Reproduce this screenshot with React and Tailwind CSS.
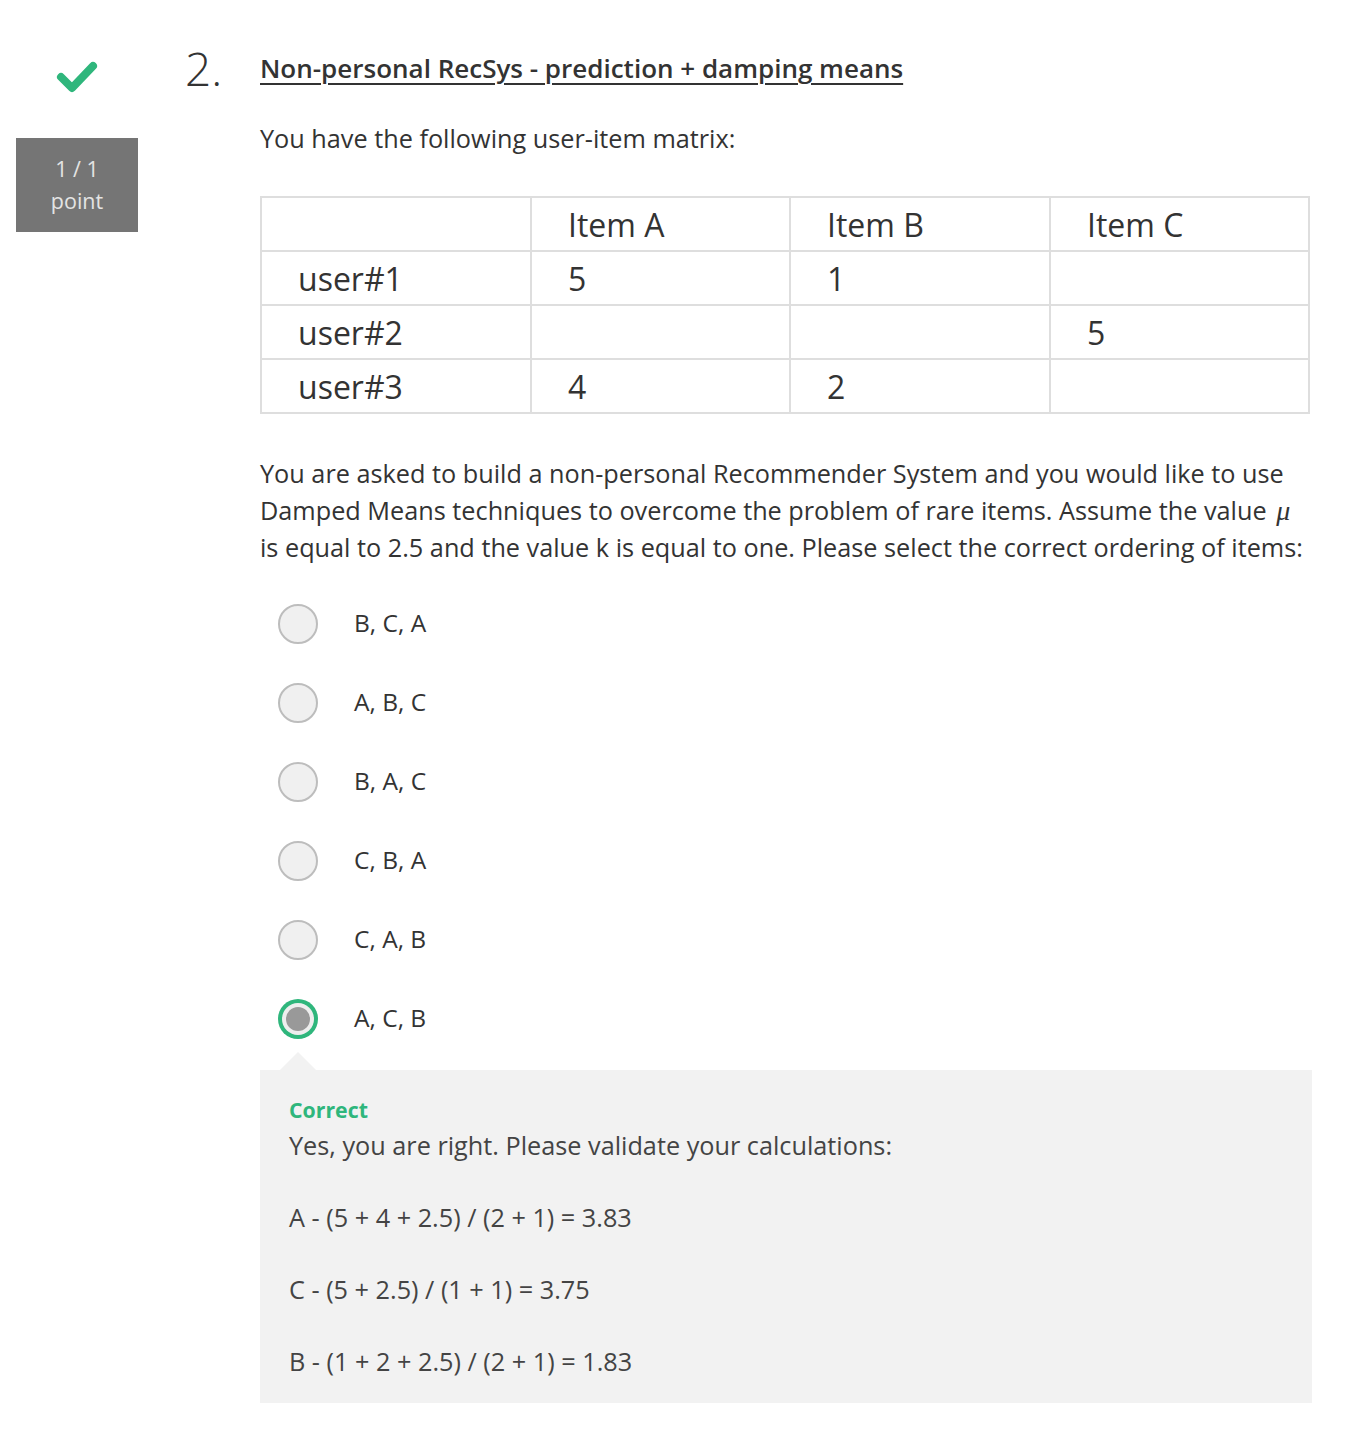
import React from 'react';

const options = ['B, C, A', 'A, B, C', 'B, A, C', 'C, B, A', 'C, A, B', 'A, C, B'];
const selected = 5;

const rows = [
  ['user#1', '5', '1', ''],
  ['user#2', '', '', '5'],
  ['user#3', '4', '2', ''],
];

function Radio({ checked }) {
  if (checked) {
    return (
      <span className="flex h-10 w-10 items-center justify-center rounded-full bg-[#2fb67c]">
        <span className="flex h-8 w-8 items-center justify-center rounded-full bg-[#eeeeee]">
          <span className="h-6 w-6 rounded-full bg-[#999999]" />
        </span>
      </span>
    );
  }
  return <span className="h-10 w-10 rounded-full border-2 border-[#bdbdbd] bg-[#f0f0f0]" />;
}

export default function App() {
  const font = { fontFamily: '"Open Sans", "Liberation Sans", sans-serif' };
  return (
    <div style={font} className="flex min-h-[1454px] w-[1364px] bg-white text-[#333333]">
      {/* score column */}
      <div className="flex w-[185px] flex-col pl-4 pt-[60px]">
        <div className="flex w-[122px] justify-center">
          <svg width="42" height="34" viewBox="0 0 42 34">
            <path d="M5 17 L16 28 L37 6" fill="none" stroke="#2fb67c" strokeWidth="8" strokeLinecap="round" strokeLinejoin="round" />
          </svg>
        </div>
        <div className="mt-[44px] flex h-[94px] w-[122px] flex-col items-center justify-center bg-[#757575] text-[21.5px] leading-[32px] text-[#e4e4e4]">
          <span>1 / 1</span>
          <span>point</span>
        </div>
      </div>

      {/* number */}
      <div className="w-[75px] pt-[40px] text-[46px] font-light leading-[56px] text-[#333333]">2.</div>

      {/* content */}
      <div className="w-[1052px] pt-[50px] pb-[50px]">
        <h2 className="text-[26px] font-semibold leading-[36px] text-[#333333] underline decoration-[2px] underline-offset-[5px]">
          Non-personal RecSys - prediction + damping means
        </h2>
        <p className="mt-[34px] text-[25.25px] leading-[36px]">You have the following user-item matrix:</p>

        <table className="mt-[40px] w-[1050px] border-collapse text-[32px]">
          <tbody>
            <tr>
              <td className="h-[54px] w-[270px] border-2 border-[#dedede] pt-[2px] pl-[36px]" />
              <td className="h-[54px] w-[259px] border-2 border-[#dedede] pt-[2px] pl-[36px]">Item A</td>
              <td className="h-[54px] w-[260px] border-2 border-[#dedede] pt-[2px] pl-[36px]">Item B</td>
              <td className="h-[54px] border-2 border-[#dedede] pt-[2px] pl-[36px]">Item C</td>
            </tr>
            {rows.map((r) => (
              <tr key={r[0]}>
                {r.map((c, i) => (
                  <td key={i} className="h-[54px] border-2 border-[#dedede] pt-[2px] pl-[36px] leading-[40px]">
                    {c}
                  </td>
                ))}
              </tr>
            ))}
          </tbody>
        </table>

        <p className="mt-[41px] text-[25.25px] leading-[37px]">
          You are asked to build a non-personal Recommender System and you would like to use Damped Means
          techniques to overcome the problem of rare items. Assume the value{' '}
          <span className="mx-[3px] text-[28px] leading-none italic" style={{ fontFamily: '"Liberation Serif", serif' }}>μ</span> is equal to 2.5 and the
          value k is equal to one. Please select the correct ordering of items:
        </p>

        <div className="mt-[18px] flex flex-col">
          {options.map((o, i) => (
            <div key={o} className="flex h-[79px] items-center pl-[18px]">
              <Radio checked={i === selected} />
              <span className="ml-[36px] text-[24.5px]">{o}</span>
            </div>
          ))}
        </div>

        <div className="relative mt-[12px] bg-[#f2f2f2] px-[29px] pt-[26px] pb-[24px]">
          <span className="absolute -top-[18px] left-[20px] h-0 w-0 border-x-[18px] border-b-[18px] border-x-transparent border-b-[#f2f2f2]" />
          <div className="text-[21.3px] font-bold leading-[28px] text-[#2fb67c]">Correct</div>
          <div className="mt-[3px] text-[25.25px] leading-[36px] text-[#444444]">
            <p>Yes, you are right. Please validate your calculations:</p>
            <p className="mt-[36px]">A - (5 + 4 + 2.5) / (2 + 1) = 3.83</p>
            <p className="mt-[36px]">C - (5 + 2.5) / (1 + 1) = 3.75</p>
            <p className="mt-[36px]">B - (1 + 2 + 2.5) / (2 + 1) = 1.83</p>
          </div>
        </div>
      </div>
    </div>
  );
}
